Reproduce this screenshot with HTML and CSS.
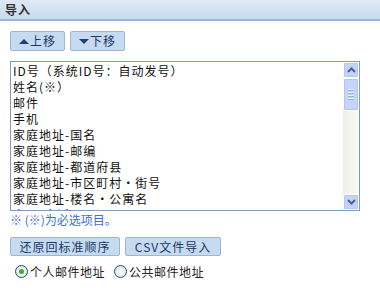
FILE: index.html
```html
<!DOCTYPE html>
<html>
<head>
<meta charset="utf-8">
<link rel="stylesheet" href="styles.css">
</head>
<body>
<div class="header">导入</div>
<div class="content">
  <div class="move-row">
    <button class="btn move"><span class="tri up"></span>上移</button>
    <button class="btn move"><span class="tri down"></span>下移</button>
  </div>
  <div class="listbox">
    <ul class="items">
      <li>ID号（系统ID号：自动发号）</li>
      <li>姓名(※）</li>
      <li>邮件</li>
      <li>手机</li>
      <li>家庭地址-国名</li>
      <li>家庭地址-邮编</li>
      <li>家庭地址-都道府县</li>
      <li>家庭地址-市区町村·街号</li>
      <li>家庭地址-楼名·公寓名</li>
      <li>家用-电话</li>
    </ul>
    <div class="scrollbar">
      <div class="sb-btn"><svg width="9" height="6" viewBox="0 0 9 6"><path d="M1 5 L4.5 1.5 L8 5" fill="none" stroke="#4d6185" stroke-width="2"/></svg></div>
      <div class="sb-thumb"><span></span><span></span><span></span><span></span></div>
      <div class="sb-track"></div>
      <div class="sb-btn"><svg width="9" height="6" viewBox="0 0 9 6"><path d="M1 1 L4.5 4.5 L8 1" fill="none" stroke="#4d6185" stroke-width="2"/></svg></div>
    </div>
  </div>
  <div class="note">※ (※)为必选项目。</div>
  <div class="action-row">
    <button class="btn action first">还原回标准顺序</button>
    <button class="btn action second">CSV文件导入</button>
  </div>
  <div class="radio-row">
    <label class="radio"><span class="dot checked"></span>个人邮件地址</label>
    <label class="radio"><span class="dot"></span>公共邮件地址</label>
  </div>
</div>
</body>
</html>
```
FILE: styles.css
```css
* { box-sizing: border-box; }
body {
  margin: 0;
  width: 380px;
  height: 300px;
  background: #fff;
  font-family: "Noto Sans CJK SC", "DejaVu Sans", sans-serif;
  font-size: 12px;
  color: #000;
}
.header {
  height: 21px;
  background: linear-gradient(#dfe9f6, #c9dbee);
  border-bottom: 2px solid #98b6e0;
  font-weight: bold;
  font-size: 12px;
  color: #333;
  padding: 0 5px;
  line-height: 19px;
  letter-spacing: 1px;
}
.content {
  padding: 10px 10px 0 10px;
}
.move-row {
  display: flex;
  gap: 5px;
}
.btn {
  font-family: "Noto Sans CJK SC", "DejaVu Sans", sans-serif;
  font-size: 12px;
  letter-spacing: 1px;
  color: #1a3a6a;
  background: #c6daf0;
  border: 1px solid #9eb6d6;
  border-radius: 2px;
  padding: 0;
  height: 20px;
  line-height: 18px;
  display: flex;
  align-items: center;
  justify-content: center;
}
.move { width: 55px; }
.tri {
  width: 0; height: 0;
  border-left: 5px solid transparent;
  border-right: 5px solid transparent;
  margin-right: 1px;
}
.tri.up { border-bottom: 5px solid #1e3f73; }
.tri.down { border-top: 5px solid #1e3f73; }
.listbox {
  margin-top: 10px;
  width: 350px;
  height: 150px;
  border: 1px solid #7f9db9;
  display: flex;
  overflow: hidden;
}
.items {
  list-style: none;
  margin: 0;
  padding: 1px 0 0 2px;
  flex: 1;
  overflow: hidden;
}
.items li {
  height: 16px;
  line-height: 16px;
  white-space: nowrap;
  color: #111;
  letter-spacing: 1px;
}
.scrollbar {
  width: 16px;
  display: flex;
  flex-direction: column;
  background: linear-gradient(to right, #eeede5, #fbfbf8);
}
.sb-btn {
  height: 16px;
  background: #c1d3fb;
  border: 1px solid #fff;
  border-radius: 2px;
  display: flex;
  align-items: center;
  justify-content: center;
  box-shadow: inset 0 0 0 1px #b4c8f6;
}
.sb-thumb {
  height: 33px;
  background: #c4d5fc;
  border: 1px solid #fff;
  border-radius: 2px;
  box-shadow: inset 0 0 0 1px #b0c6f5;
  display: flex;
  flex-direction: column;
  align-items: center;
  justify-content: center;
  gap: 1px;
}
.sb-thumb span {
  width: 6px;
  height: 1px;
  background: #eef3fe;
  border-bottom: 1px solid #8fb0f0;
  box-sizing: content-box;
}
.sb-track { flex: 1; }
.note {
  color: #3c6fd4;
  margin-top: 0;
  height: 18px;
  line-height: 18px;
}
.action-row {
  display: flex;
  gap: 5px;
  margin-top: 8px;
}
.action { height: 19px; }
.action.first { width: 110px; }
.action.second { width: 96px; }
.radio-row {
  display: flex;
  gap: 9px;
  margin-top: 7px;
  padding-left: 5px;
  height: 16px;
  align-items: center;
}
.radio {
  display: flex;
  align-items: center;
  color: #222;
  letter-spacing: 0.5px;
}
.dot {
  width: 13px;
  height: 13px;
  border-radius: 50%;
  border: 1px solid #1d5180;
  background: radial-gradient(circle at 50% 60%, #fff, #dcd9cf);
  margin-right: 2px;
  display: flex;
  align-items: center;
  justify-content: center;
}
.dot.checked::after {
  content: "";
  width: 5px;
  height: 5px;
  border-radius: 50%;
  background: #31b22e;
}
```
